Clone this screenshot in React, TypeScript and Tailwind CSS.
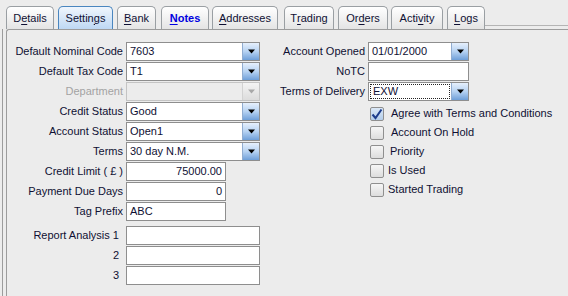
import React from "react";

const tabs = [
  { pre: "D", u: "e", post: "tails", cls: "w-[48px] ml-0" },
  { pre: "Settin", u: "g", post: "s", cls: "w-[55px] ml-[4px]", active: true },
  { pre: "", u: "B", post: "ank", cls: "w-[39px] ml-[4px]" },
  { pre: "", u: "N", post: "otes", cls: "w-[48px] ml-[5px]", bold: true },
  { pre: "", u: "A", post: "ddresses", cls: "w-[66px] ml-[3px]" },
  { pre: "T", u: "r", post: "ading", cls: "w-[50px] ml-[6px]" },
  { pre: "Or", u: "d", post: "ers", cls: "w-[50px] ml-[4px]" },
  { pre: "Acti", u: "v", post: "ity", cls: "w-[52px] ml-[3px]" },
  { pre: "", u: "L", post: "ogs", cls: "w-[38px] ml-[4px]" },
];

function Arrow({ disabled }: { disabled?: boolean }) {
  return (
    <svg width="7" height="5" viewBox="0 0 7 5">
      <path d="M0 0.5h7L3.5 4.5z" fill={disabled ? "#a8a8a8" : "#000"} />
    </svg>
  );
}

function Combo({ value, w, disabled, focus }: { value: string; w: string; disabled?: boolean; focus?: boolean }) {
  return (
    <div className={`flex h-[19px] ${w} border ${disabled ? "border-[#c4c4c4] bg-[#ececec]" : "border-[#8e8e8e] bg-white"}`}>
      <div className="flex-1 flex items-center pl-[1px] py-[1px] pr-[1px]">
        <span className={`flex items-center h-full w-full pl-[2px] leading-none ${focus ? "border border-dotted border-[#222]" : ""}`}>
          {value}
        </span>
      </div>
      <div
        className={`w-[17px] h-full flex items-center justify-center border-l ${
          disabled
            ? "border-[#d2d2d2] bg-linear-to-b from-[#f4f4f4] to-[#dcdcdc]"
            : "border-[#90acd0] bg-linear-to-b from-[#e6f0fc] via-[#b6d2f2] to-[#6f9fd8]"
        }`}
      >
        <Arrow disabled={disabled} />
      </div>
    </div>
  );
}

function Text({ value, w, right }: { value: string; w: string; right?: boolean }) {
  return (
    <div className={`flex items-center h-[19px] ${w} border border-[#8e8e8e] bg-white px-[3px] ${right ? "justify-end" : ""}`}>
      <span className="leading-none">{value}</span>
    </div>
  );
}

function Row({ label, children, dim, lw }: { label: string; children: React.ReactNode; dim?: boolean; lw: string }) {
  return (
    <div className="flex items-center h-[19px] mb-[1px]">
      <span className={`${lw} text-right pr-[3px] whitespace-nowrap ${dim ? "text-[#a3a3a3]" : ""}`}>{label}</span>
      {children}
    </div>
  );
}

function Check({ label, checked, gap }: { label: string; checked?: boolean; gap: string }) {
  return (
    <div className="flex items-center h-[19px] ml-[110px]">
      <div
        className={`w-[14px] h-[14px] rounded-[2px] border border-[#8f8f8f] flex items-center justify-center ${
          checked ? "bg-linear-to-b from-[#dbe8f7] to-[#b3cdea]" : "bg-linear-to-b from-[#f6f6f6] to-[#dddddd]"
        }`}
      >
        {checked && (
          <svg width="12" height="12" viewBox="0 0 12 12">
            <path d="M1.5 6.5l3 3.5L10.5 1.5" stroke="#1d3d8c" strokeWidth="2" fill="none" />
          </svg>
        )}
      </div>
      <span className={`${gap} whitespace-nowrap`}>{label}</span>
    </div>
  );
}

export default function App() {
  return (
    <div className="w-[568px] h-[296px] bg-[#ececec] overflow-hidden text-[11px] text-[#0f1033] font-['Liberation_Sans',Arial,sans-serif]">
      <div className="flex items-end h-[29px] pl-[6px]">
        {tabs.map((t, i) => (
          <div
            key={i}
            className={`${t.cls} h-[23px] flex items-center justify-center rounded-t-[5px] border border-b-0 ${
              t.active
                ? "border-[#4a86bf] bg-linear-to-b from-[#f0f6fd] to-[#bed8f3]"
                : "border-[#9a9fa3] bg-linear-to-b from-[#ffffff] to-[#e4e4e4]"
            } ${t.bold ? "font-bold text-[#0000e0]" : ""}`}
          >
            {t.pre}
            <span className="underline underline-offset-2">{t.u}</span>
            {t.post}
          </div>
        ))}
        <div className="flex-1 h-[4px] border-t border-[#b4b4b4]" />
      </div>
      <div className="flex h-[267px] ml-[2px] border-l border-[#9c9c9c]">
        <div className="flex flex-1 ml-[3px] border-l border-t border-[#9c9c9c] rounded-tl-[3px] pt-[12px]">
          <div className="flex flex-col w-[253px]">
            <Row label="Default Nominal Code" lw="w-[119px]">
              <Combo value="7603" w="w-[134px]" />
            </Row>
            <Row label="Default Tax Code" lw="w-[119px]">
              <Combo value="T1" w="w-[134px]" />
            </Row>
            <Row label="Department" lw="w-[119px]" dim>
              <Combo value="" w="w-[134px]" disabled />
            </Row>
            <Row label="Credit Status" lw="w-[119px]">
              <Combo value="Good" w="w-[134px]" />
            </Row>
            <Row label="Account Status" lw="w-[119px]">
              <Combo value="Open1" w="w-[134px]" />
            </Row>
            <Row label="Terms" lw="w-[119px]">
              <Combo value="30 day N.M." w="w-[134px]" />
            </Row>
            <Row label="Credit Limit ( £ )" lw="w-[119px]">
              <Text value="75000.00" w="w-[100px]" right />
            </Row>
            <Row label="Payment Due Days" lw="w-[119px]">
              <Text value="0" w="w-[100px]" right />
            </Row>
            <Row label="Tag Prefix" lw="w-[119px]">
              <Text value="ABC" w="w-[100px]" />
            </Row>
            <div className="h-[4px]" />
            <Row label="Report Analysis 1" lw="w-[119px] pr-[7px]">
              <Text value="" w="w-[134px]" />
            </Row>
            <Row label="2" lw="w-[119px] pr-[7px]">
              <Text value="" w="w-[134px]" />
            </Row>
            <Row label="3" lw="w-[119px] pr-[7px]">
              <Text value="" w="w-[134px]" />
            </Row>
          </div>
          <div className="flex flex-col">
            <Row label="Account Opened" lw="w-[108px] pr-[1px]">
              <Combo value="01/01/2000" w="w-[101px]" />
            </Row>
            <Row label="NoTC" lw="w-[108px] pr-[1px]">
              <Text value="" w="w-[101px]" />
            </Row>
            <Row label="Terms of Delivery" lw="w-[108px] pr-[1px]">
              <Combo value="EXW" w="w-[101px]" focus />
            </Row>
            <div className="h-[2px]" />
            <Check label="Agree with Terms and Conditions" checked gap="ml-[7px]" />
            <Check label="Account On Hold" gap="ml-[7px]" />
            <Check label="Priority" gap="ml-[6px]" />
            <Check label="Is Used" gap="ml-[4px]" />
            <Check label="Started Trading" gap="ml-[4px]" />
          </div>
        </div>
      </div>
    </div>
  );
}
